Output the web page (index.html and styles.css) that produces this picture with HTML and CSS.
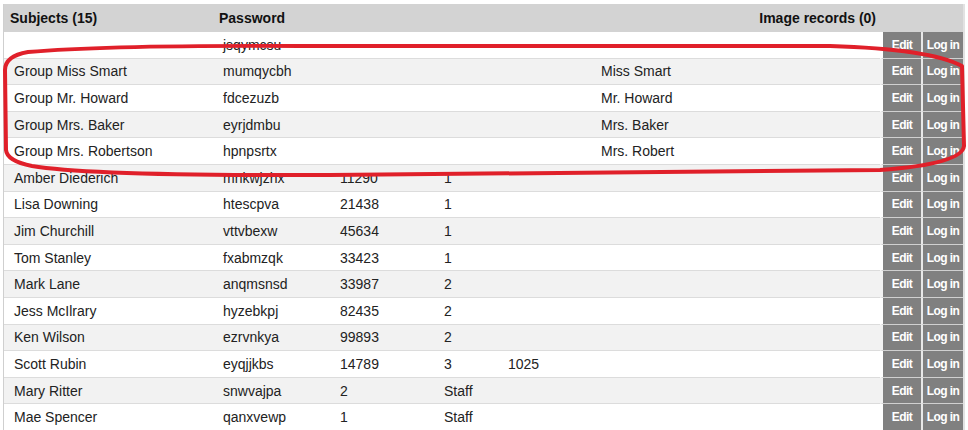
FILE: index.html
```html
<!DOCTYPE html>
<html lang="en">
<head>
    <meta charset="UTF-8">
    <meta name="viewport" content="width=device-width, initial-scale=1.0">
    <title>Subjects</title>
    <link rel="stylesheet" href="styles.css">
</head>
<body>
    <div class="wrap">
        <table class="subjects">
            <colgroup>
                <col class="c-name">
                <col class="c-pass">
                <col class="c-code">
                <col class="c-grade">
                <col class="c-room">
                <col class="c-group">
                <col class="c-edit">
                <col class="c-login">
            </colgroup>
            <thead>
                <tr>
                    <th>Subjects (15)</th>
                    <th>Password</th>
                    <th></th>
                    <th></th>
                    <th></th>
                    <th class="right">Image records (0)</th>
                    <th></th>
                    <th></th>
                </tr>
            </thead>
            <tbody>
                <tr><td></td><td>jsqymcsu</td><td></td><td></td><td></td><td></td><td class="btn edit">Edit</td><td class="btn">Log in</td></tr>
                <tr><td>Group Miss Smart</td><td>mumqycbh</td><td></td><td></td><td></td><td>Miss Smart</td><td class="btn edit">Edit</td><td class="btn">Log in</td></tr>
                <tr><td>Group Mr. Howard</td><td>fdcezuzb</td><td></td><td></td><td></td><td>Mr. Howard</td><td class="btn edit">Edit</td><td class="btn">Log in</td></tr>
                <tr><td>Group Mrs. Baker</td><td>eyrjdmbu</td><td></td><td></td><td></td><td>Mrs. Baker</td><td class="btn edit">Edit</td><td class="btn">Log in</td></tr>
                <tr><td>Group Mrs. Robertson</td><td>hpnpsrtx</td><td></td><td></td><td></td><td>Mrs. Robert</td><td class="btn edit">Edit</td><td class="btn">Log in</td></tr>
                <tr><td>Amber Diederich</td><td>mnkwjzhx</td><td>11290</td><td>1</td><td></td><td></td><td class="btn edit">Edit</td><td class="btn">Log in</td></tr>
                <tr><td>Lisa Downing</td><td>htescpva</td><td>21438</td><td>1</td><td></td><td></td><td class="btn edit">Edit</td><td class="btn">Log in</td></tr>
                <tr><td>Jim Churchill</td><td>vttvbexw</td><td>45634</td><td>1</td><td></td><td></td><td class="btn edit">Edit</td><td class="btn">Log in</td></tr>
                <tr><td>Tom Stanley</td><td>fxabmzqk</td><td>33423</td><td>1</td><td></td><td></td><td class="btn edit">Edit</td><td class="btn">Log in</td></tr>
                <tr><td>Mark Lane</td><td>anqmsnsd</td><td>33987</td><td>2</td><td></td><td></td><td class="btn edit">Edit</td><td class="btn">Log in</td></tr>
                <tr><td>Jess McIlrary</td><td>hyzebkpj</td><td>82435</td><td>2</td><td></td><td></td><td class="btn edit">Edit</td><td class="btn">Log in</td></tr>
                <tr><td>Ken Wilson</td><td>ezrvnkya</td><td>99893</td><td>2</td><td></td><td></td><td class="btn edit">Edit</td><td class="btn">Log in</td></tr>
                <tr><td>Scott Rubin</td><td>eyqjjkbs</td><td>14789</td><td>3</td><td>1025</td><td></td><td class="btn edit">Edit</td><td class="btn">Log in</td></tr>
                <tr><td>Mary Ritter</td><td>snwvajpa</td><td>2</td><td>Staff</td><td></td><td></td><td class="btn edit">Edit</td><td class="btn">Log in</td></tr>
                <tr><td>Mae Spencer</td><td>qanxvewp</td><td>1</td><td>Staff</td><td></td><td></td><td class="btn edit">Edit</td><td class="btn">Log in</td></tr>
            </tbody>
        </table>
        <!-- red marker drawn round the group rows -->
        <svg class="marker" width="968" height="430" viewBox="0 0 968 430">
            <path d="M6 150 L5 70 Q5 56 28 52 Q110 45 300 46 L830 46 Q930 49 962 66 L964 146 Q962 164 880 170 L330 175 Q90 176 32 166 Q7 161 6 150 Z" />
        </svg>
    </div>
</body>
</html>
```

FILE: styles.css
```css
*{
    margin: 0;
    padding: 0;
}

body{
    font-family: "Liberation Sans", Arial, sans-serif;
    font-size: 14px;
    color: #222;
    background: #fff;
}

.wrap{
    position: relative;
    width: 968px;
    height: 430px;
    padding: 4px 0 0 3px;
    box-sizing: border-box;
    overflow: hidden;
}

.subjects{
    table-layout: fixed;
    border-collapse: separate;
    border-spacing: 0;
    width: 962px;
    border-left: 1px solid #cfcfcf;
    border-right: 2px solid #e2e2e2;
}

.c-name{ width: 209px; }
.c-pass{ width: 117px; }
.c-code{ width: 104px; }
.c-grade{ width: 64px; }
.c-room{ width: 93px; }
.c-group{ width: 289px; }
.c-edit{ width: 41px; }
.c-login{ width: 42px; }

.subjects th{
    height: 28px;
    background: #d3d3d3;
    color: #111;
    font-weight: bold;
    text-align: left;
    padding-left: 6px;
    white-space: nowrap;
}

.subjects th.right{
    text-align: right;
    padding-right: 4px;
}

.subjects td{
    height: 25.6px;
    padding-left: 10px;
    border-bottom: 1px solid #dcdcdc;
    white-space: nowrap;
    overflow: hidden;
}

.subjects tbody tr:nth-child(even){
    background: #f2f2f2;
}

.subjects td.btn{
    padding: 0;
    background: #808080;
    color: #fff;
    font-size: 12px;
    font-weight: bold;
    letter-spacing: -0.6px;
    text-align: center;
    border-left: 2px solid #e8e8e8;
    border-bottom-color: #d0d0d0;
}

.subjects td.edit{
    border-left: 3px solid #fff;
}

.subjects tbody tr:nth-child(even) td.edit{
    border-left-color: #f2f2f2;
}

.marker{
    position: absolute;
    left: 0;
    top: 0;
    pointer-events: none;
}

.marker path{
    fill: none;
    stroke: #e0202a;
    stroke-width: 4;
    stroke-linejoin: round;
}
```
